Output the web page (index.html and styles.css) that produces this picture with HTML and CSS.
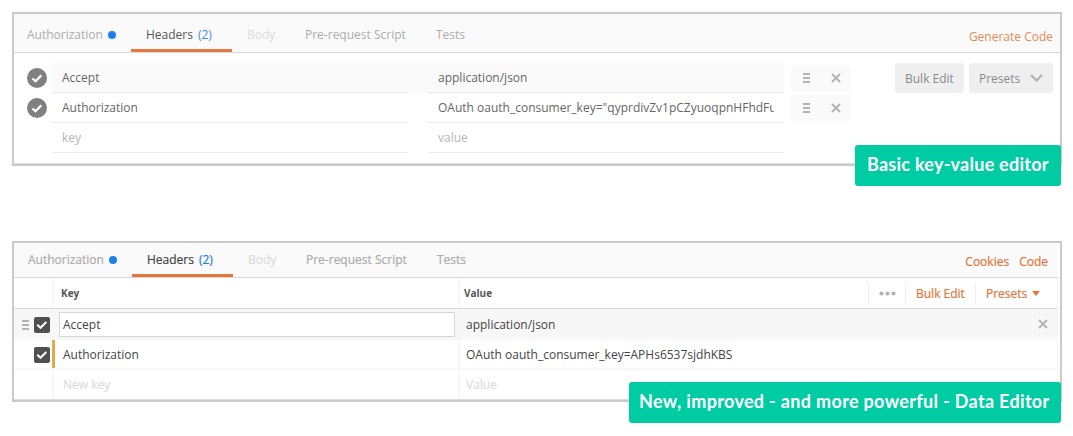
FILE: index.html
```
<!DOCTYPE html>
<html lang="en">
<head>
<meta charset="utf-8">
<title>Header editors</title>
<link rel="stylesheet" href="styles.css">
</head>
<body>
<section class="panel basic">
  <nav class="tabs">
    <div class="tab auth">Authorization<i class="dot"></i></div>
    <div class="tab active">Headers <span class="count">(2)</span></div>
    <div class="tab body">Body</div>
    <div class="tab script">Pre-request Script</div>
    <div class="tab">Tests</div>
    <div class="links"><a>Generate Code</a></div>
  </nav>
  <div class="editor">
    <div class="rows">
      <div class="row">
        <svg class="check" viewBox="0 0 20 20"><circle cx="10" cy="10" r="10" fill="#808080"/><path d="M5.5 10.5l3 2.7 5.8-5.8" fill="none" stroke="#fff" stroke-width="2.2"/></svg>
        <div class="fields shaded"><div class="field">Accept</div><div class="field">application/json</div></div>
        <div class="actions">
          <svg viewBox="0 0 60 26"><path d="M12 9h7M12 13h7M12 17h7" stroke="#b3b3b3" stroke-width="2"/><path d="M41 9l8 8M49 9l-8 8" stroke="#b3b3b3" stroke-width="2"/></svg>
        </div>
      </div>
      <div class="row">
        <svg class="check" viewBox="0 0 20 20"><circle cx="10" cy="10" r="10" fill="#808080"/><path d="M5.5 10.5l3 2.7 5.8-5.8" fill="none" stroke="#fff" stroke-width="2.2"/></svg>
        <div class="fields"><div class="field">Authorization</div><div class="field"><span class="clip">OAuth oauth_consumer_key="qyprdivZv1pCZyuoqpnHFhdFu</span></div></div>
        <div class="actions">
          <svg viewBox="0 0 60 26"><path d="M12 9h7M12 13h7M12 17h7" stroke="#b3b3b3" stroke-width="2"/><path d="M41 9l8 8M49 9l-8 8" stroke="#b3b3b3" stroke-width="2"/></svg>
        </div>
      </div>
      <div class="row">
        <div class="check"></div>
        <div class="fields empty"><div class="field">key</div><div class="field">value</div></div>
      </div>
    </div>
    <div class="buttons">
      <div class="button">Bulk Edit</div>
      <div class="button presets">Presets<svg width="13" height="8" viewBox="0 0 13 8"><path d="M1 1l5.5 5.5L12 1" fill="none" stroke="#b0b0b0" stroke-width="2"/></svg></div>
    </div>
  </div>
  <div class="badge">Basic key-value editor</div>
</section>

<section class="panel data">
  <nav class="tabs">
    <div class="tab auth">Authorization<i class="dot"></i></div>
    <div class="tab active">Headers <span class="count">(2)</span></div>
    <div class="tab body">Body</div>
    <div class="tab script">Pre-request Script</div>
    <div class="tab">Tests</div>
    <div class="links"><a>Cookies</a><a>Code</a></div>
  </nav>
  <div class="table">
    <div class="line head">
      <div class="lead"></div>
      <div class="cell key">Key</div>
      <div class="cell value">Value</div>
      <div class="tools">
        <div class="tool more"><svg width="17" height="5" viewBox="0 0 17 5"><g fill="#b3b3b3"><circle cx="2.5" cy="2.5" r="2.1"/><circle cx="8.5" cy="2.5" r="2.1"/><circle cx="14.5" cy="2.5" r="2.1"/></g></svg></div>
        <div class="tool bulk">Bulk Edit</div>
        <div class="tool preset">Presets<svg width="8" height="5" viewBox="0 0 8 5"><path d="M0 0h8L4 5z" fill="#e37638"/></svg></div>
      </div>
    </div>
    <div class="line selected">
      <div class="lead">
        <svg width="7" height="10" viewBox="0 0 7 10"><path d="M0 1h7M0 5h7M0 9h7" stroke="#b3b3b3" stroke-width="1.8"/></svg>
        <svg width="16" height="16" viewBox="0 0 16 16"><rect width="16" height="16" rx="2" fill="#505050"/><path d="M3.3 7.8l3.2 3 5.8-5.8" fill="none" stroke="#fff" stroke-width="2"/></svg>
      </div>
      <div class="cell key"><div class="input">Accept</div></div>
      <div class="cell value">application/json</div>
      <svg class="remove" width="10" height="10" viewBox="0 0 10 10"><path d="M1 1l8 8M9 1L1 9" stroke="#b3b3b3" stroke-width="1.8"/></svg>
    </div>
    <div class="line changed">
      <div class="lead">
        <svg width="16" height="16" viewBox="0 0 16 16"><rect width="16" height="16" rx="2" fill="#505050"/><path d="M3.3 7.8l3.2 3 5.8-5.8" fill="none" stroke="#fff" stroke-width="2"/></svg>
      </div>
      <div class="cell key">Authorization</div>
      <div class="cell value">OAuth oauth_consumer_key=APHs6537sjdhKBS</div>
    </div>
    <div class="line new">
      <div class="lead"></div>
      <div class="cell key">New key</div>
      <div class="cell value">Value</div>
    </div>
  </div>
  <div class="badge">New, improved - and more powerful - Data Editor</div>
</section>
</body>
</html>
```
FILE: styles.css
```
* { box-sizing: border-box; }
body {
  margin: 0;
  padding: 12px 11px 0 12px;
  height: 436px;
  overflow: hidden;
  background: #fff;
  color: #666;
  font: 12px/18px "Open Sans", sans-serif;
}
svg { display: block; flex: none; }
.panel {
  position: relative;
  width: 1050px;
  border: 2px solid #cacaca;
  background: #fff;
}
.basic { height: 154px; margin-bottom: 75px; }
.data { height: 161px; padding-right: 2px; }

/* Tabs */
.tabs {
  display: flex;
  height: 39px;
  padding-left: 13px;
  background: #fafafa;
  border-bottom: 1px solid #d9d9d9;
  color: #adadad;
}
.tab { display: flex; padding-top: 12px; height: 38px; white-space: nowrap; }
.auth { width: 104px; }
.dot { width: 8px; height: 8px; margin: 5px 0 0 5px; border-radius: 50%; background: #1b80eb; }
.active { width: 101px; padding-left: 15px; border-bottom: 3px solid #e37840; color: #555; }
.count { margin-left: 5px; color: #3d8fe8; }
.body { width: 73px; padding-left: 15px; color: #dcdcdc; }
.script { width: 131px; }
.links { display: flex; gap: 10px; margin-left: auto; padding: 14px 7px 0 0; color: #e58a58; }
.data .tabs { height: 35px; padding-left: 14px; background: #fafafa; -webkit-text-stroke: .2px; }
.data .tab { height: 34px; padding-top: 8px; }
.data .active { color: #444; border-color: #e37638; }
.data .count { color: #1b80eb; }
.data .links { padding: 10px 10px 0 0; color: #e37638; }

/* Basic key-value editor */
.editor { display: flex; justify-content: space-between; padding: 10px 7px 0 13px; height: 111px; border-bottom: 1px solid #dedede; }
.row { display: flex; height: 30px; }
.check { width: 20px; height: 20px; margin: 5px 5px 0 0; }
.fields { display: flex; gap: 20px; height: 30px; }
.shaded { background: #fafafa; }
.field { width: 356px; padding: 6px 10px 0; border-bottom: 1px solid #ececec; }
.clip { display: block; overflow: hidden; white-space: nowrap; }
.empty { color: #b5b5b5; }
.actions { width: 60px; height: 26px; margin: 2px 0 0 7px; border-radius: 3px; background: #fafafa; }
.buttons { display: flex; gap: 5px; }
.button { width: 69px; height: 30px; padding: 7px 0 0 10px; border-radius: 3px; background: #efefef; color: #8a8a8a; white-space: nowrap; }
.presets { display: flex; width: 84px; }
.presets svg { margin: 4px 0 0 10px; }

/* Data editor */
.table { height: 122px; border-right: 1px solid #f5f5f5; border-bottom: 1px solid #dedede; color: #444; }
.line { display: flex; height: 30px; border-bottom: 2px solid #f7f7f7; }
.lead { display: flex; gap: 5px; justify-content: flex-end; width: 38px; padding-right: 2px; align-items: center; }
.cell { border-left: 2px solid #f7f7f7; padding: 6px 0 0 9px; white-space: nowrap; }
.key { width: 406px; }
.value { padding-left: 6px; }
.head { height: 31px; border-bottom: 1px solid #d9d9d9; }
.head .cell { padding: 6px 0 0 7px; color: #555; font-size: 10px; font-weight: 700; }
.head .value { padding-left: 4px; }
.tools { display: flex; align-items: center; margin-left: auto; color: #e37638; -webkit-text-stroke: .2px; }
.tool { display: flex; align-items: center; height: 20px; padding-top: 1px; border-left: 1px solid #eee; white-space: nowrap; }
.more { width: 37px; padding-left: 10px; }
.bulk { width: 70px; padding-left: 10px; }
.preset { width: 82px; padding-left: 10px; }
.preset svg { margin-left: 5px; }
.selected { height: 31px; background: #f7f7f7; }
.selected .lead { height: 31px; }
.selected .value { padding-top: 7px; }
.selected .key { padding: 3px 0 0 5px; }
.input { width: 396px; height: 25px; padding: 3px 3px; border: 1px solid #d6d6d6; background: #fff; }
.remove { margin: 10px 9px 0 auto; }
.changed .lead { height: 30px; }
.changed .key { border-left: 3px solid #e0aa45; padding-left: 8px; }
.new { height: 29px; border: 0; color: #dcdcdc; -webkit-text-stroke: .2px; }

/* Captions over the lower right corners */
.badge {
  position: absolute;
  right: -1px;
  top: 131px;
  width: 206px;
  height: 41px;
  border-radius: 3px;
  background: #00cca3;
  color: #fff;
  font: 700 18px/39px Lato, sans-serif;
  letter-spacing: .25px;
  padding-left: 12px;
  white-space: nowrap;
}
.data .badge { top: 139px; width: 432px; padding-left: 10px; letter-spacing: .33px; }
```
